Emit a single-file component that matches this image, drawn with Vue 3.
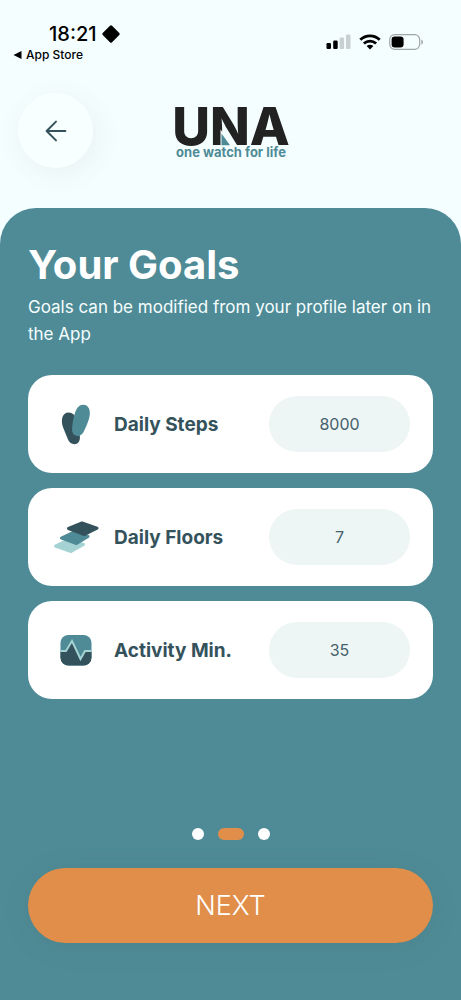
<script setup>
import { ref } from 'vue'

const goals = ref([
  { id: 'steps', label: 'Daily Steps', value: '8000' },
  { id: 'floors', label: 'Daily Floors', value: '7' },
  { id: 'activity', label: 'Activity Min.', value: '35' },
])
const pages = [1, 2, 3]
const current = 2
</script>

<template>
  <div class="screen">
    <div class="status">
      <div class="status-left">
        <div class="clock">
          <span>18:21</span>
          <svg width="20" height="20" viewBox="0 0 20 20" aria-hidden="true">
            <rect x="3.4" y="3.4" width="13.2" height="13.2" rx="1.5" transform="rotate(45 10 10)" />
          </svg>
        </div>
        <a class="back-app" href="#">
          <svg width="9" height="8" viewBox="0 0 9 8" aria-hidden="true"><path d="M0.500 4 8.500 0v8z" /></svg>
          <span>App Store</span>
        </a>
      </div>
      <div class="status-right">
        <svg width="25" height="16" viewBox="0 0 25 16" aria-hidden="true">
          <rect x="0.5" y="9" width="4.5" height="6" rx="1.2" />
          <rect x="7.2" y="6.6" width="4.5" height="8.4" rx="1.2" />
          <rect x="13.6" y="3.4" width="4.5" height="11.600" rx="1.2" fill="#c9d0d1" />
          <rect x="20" y="0.4" width="4.500" height="14.600" rx="1.2" fill="#c9d0d1" />
        </svg>
        <svg width="22" height="16" viewBox="0 0 22 16" aria-hidden="true">
          <g fill="none" stroke="#000" stroke-width="2.8">
            <path d="M1.3 5.8a13.8 13.8 0 0 1 19.4 0" />
            <path d="M4.9 9.6a8.7 8.7 0 0 1 12.2 0" />
          </g>
          <path d="M11 15.4 7.6 12a4.9 4.9 0 0 1 6.8 0z" />
        </svg>
        <svg width="35" height="16" viewBox="0 0 35 16" aria-hidden="true">
          <rect x="0.7" y="0.7" width="30" height="14.6" rx="5" fill="none" stroke="#a0a7a8" stroke-width="1.2" />
          <rect x="2.6" y="2.6" width="12" height="10.8" rx="3.2" />
          <path d="M32.3 5.400c2.2.8 2.2 4.400 0 5.200z" fill="#a0a7a8" />
        </svg>
      </div>
    </div>

    <header class="top">
      <button class="back" type="button" aria-label="Back">
        <svg width="22" height="22" viewBox="0 0 22 22" fill="none" stroke="#34525b" stroke-width="2" stroke-linecap="round" stroke-linejoin="round" aria-hidden="true">
          <path d="M20.4 11H1.6M11 1.6 1.6 11l9.4 9.4" />
        </svg>
      </button>
      <div class="brand">
        <svg class="logo" width="114" height="56" viewBox="0 0 114 56" role="img" aria-label="UNA one watch for life">
          <text class="wordmark" x="57" y="39" text-anchor="middle">UNA</text>
          <path d="M46.500 23.500 58 39.200H46.500z" fill="#f5feff" />
          <path d="M47.500 27.500 56 39.200H47.500z" fill="#4f8b96" />
          <text class="tagline" x="57" y="51" text-anchor="middle">one watch for life</text>
        </svg>
      </div>
    </header>

    <main class="panel">
      <h1>Your Goals</h1>
      <p class="intro">Goals can be modified from your profile later on in the App</p>

      <form class="goals" @submit.prevent>
        <div v-for="goal in goals" :key="goal.id" class="card">
          <svg v-if="goal.id === 'steps'" class="icon" width="48" height="44" viewBox="0 0 48 44" aria-hidden="true">
            <path d="M16.500 10.600c4.200 0 6.900 3 8 7.400l3.200 15.500c1 4.700-1.200 8.700-5.200 8.700-3 0-5.200-1.700-6.500-4.600l-4.700-11.600c-2.900-7.300-1.300-15.400 5.200-15.400z" fill="#34525b" />
            <path d="M31.500 2.700c5.300.3 7 5.600 6.200 10.800-.8 4.900-3 9.800-5.200 14.600-1.500 3.800-3.600 6-6.800 5.900-4-.2-5.900-3.200-5.600-7.200.3-5 1.100-11.300 3-16.300 1.600-4.700 4.300-8 8.400-7.800z" fill="#4f8b96" />
          </svg>
          <svg v-else-if="goal.id === 'floors'" class="icon" width="48" height="44" viewBox="0 0 48 44" aria-hidden="true">
            <g stroke-width="3" stroke-linejoin="round">
              <path d="M3.500 31 16 25l15.500 4.500L19 36.500z" fill="#a5d2d3" stroke="#a5d2d3" />
              <path d="M9.500 23 23 16.500l13 5L24.500 28.500z" fill="#4f8b96" stroke="#4f8b96" />
              <path d="M16.500 13.500 30 8l15 5.200L32.500 19.500z" fill="#34525b" stroke="#34525b" />
            </g>
          </svg>
          <svg v-else class="icon" width="48" height="44" viewBox="0 0 48 44" aria-hidden="true">
            <rect x="8.500" y="7" width="31" height="30.500" rx="8" fill="#4f8b96" />
            <path d="M8.500 23.500h5.500l6-10 8.500 17.500 4.500-7.500h6.500v6a8 8 0 0 1-8 8h-15a8 8 0 0 1-8-8z" fill="#34525b" />
            <path d="M8.500 23h5.500l6-10 8.500 18 4.500-8h6.500" fill="none" stroke="#a5d2d3" stroke-width="2" />
          </svg>
          <label :for="goal.id">{{ goal.label }}</label>
          <input :id="goal.id" v-model="goal.value" type="text" inputmode="numeric" />
        </div>
      </form>

      <div class="dots">
        <span v-for="page in pages" :key="page" :class="['dot', { active: page === current }]"></span>
      </div>
      <button class="next" type="button">NEXT</button>
    </main>
  </div>
</template>

<style>
body {
  margin: 0;
  background: #f5feff;
}
</style>

<style scoped>
.screen {
  display: flex;
  flex-direction: column;
  min-height: 100vh;
  background: #f5feff;
  font-family: Inter, "Liberation Sans", sans-serif;
}
.status {
  display: flex;
  justify-content: space-between;
  padding: 22px 37px 0 13px;
}
.clock {
  display: flex;
  align-items: center;
  gap: 4px;
  padding-left: 36px;
  font-size: 20px;
  font-weight: 500;
  line-height: 24px;
}
.back-app {
  display: flex;
  align-items: center;
  gap: 4px;
  color: #000;
  font-size: 12px;
  font-weight: 500;
  line-height: 18px;
  text-decoration: none;
}
.status-right {
  display: flex;
  align-items: flex-start;
  gap: 8px;
  padding-top: 12px;
}
.top {
  display: grid;
  grid-template-columns: 1fr auto 1fr;
  align-items: start;
  padding: 29px 18px 40px;
}
.back {
  display: grid;
  place-items: center;
  width: 75px;
  height: 75px;
  padding: 0;
  border: 0;
  border-radius: 50%;
  background: #f8ffff;
  box-shadow: 4px 6px 28px rgba(52, 82, 91, 0.07);
}
.brand {
  padding-top: 13px;
}
.logo {
  display: block;
  overflow: visible;
}
.wordmark {
  fill: #222;
  font-size: 52px;
  font-weight: 800;
}
.tagline {
  fill: #4f8b96;
  font-size: 13px;
  font-weight: 700;
}
.panel {
  display: flex;
  flex: 1;
  flex-direction: column;
  padding: 33px 28px 57px;
  border-radius: 36px 36px 0 0;
  background: #4f8b96;
}
h1 {
  margin: 0;
  color: #fff;
  font-size: 40px;
  font-weight: 700;
  line-height: 48px;
}
.intro {
  margin: 5px 0 27px;
  color: #f5feff;
  font-size: 17px;
  line-height: 27px;
}
.goals {
  display: flex;
  flex-direction: column;
  gap: 15px;
}
.card {
  display: flex;
  align-items: center;
  padding: 21px 23px 21px 24px;
  border-radius: 24px;
  background: #fff;
}
.icon {
  flex: none;
  margin-right: 14px;
}
label {
  flex: 1;
  color: #34525b;
  font-size: 19px;
  font-weight: 700;
  white-space: nowrap;
}
input {
  box-sizing: border-box;
  width: 35%;
  min-width: 141px;
  height: 56px;
  padding: 0;
  border: 0;
  border-radius: 28px;
  background: #eef5f5;
  color: #45616a;
  font: 16px Inter, "Liberation Sans", sans-serif;
  text-align: center;
}
.dots {
  display: flex;
  justify-content: center;
  gap: 14px;
  margin-top: auto;
  padding: 24px 0 28px;
}
.dot {
  width: 12px;
  height: 12px;
  border-radius: 6px;
  background: #fff;
}
.dot.active {
  width: 26px;
  background: #e08e4a;
}
.next {
  height: 75px;
  padding: 0;
  border: 0;
  border-radius: 38px;
  background: #e08e4a;
  box-shadow: 0 4px 28px rgba(52, 82, 91, 0.1);
  color: #fff;
  font: 300 27px Inter, "Liberation Sans", sans-serif;
}
</style>
